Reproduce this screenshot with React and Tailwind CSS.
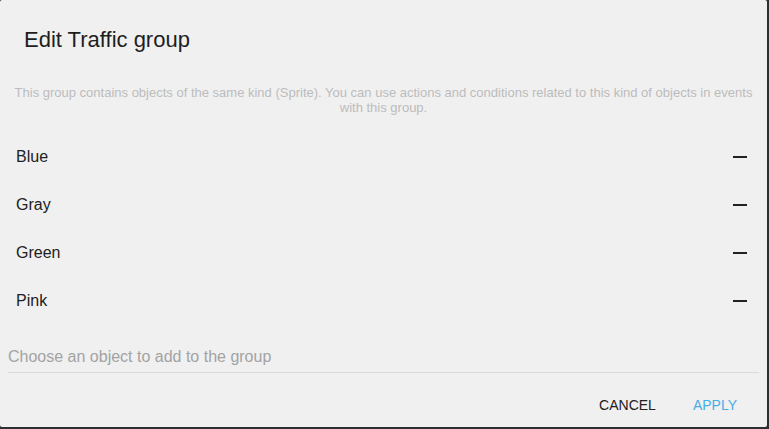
import React from "react";

const objects = ["Blue", "Gray", "Green", "Pink"];

function MinusIcon() {
  return (
    <svg width="24" height="24" viewBox="0 0 24 24" className="block">
      <rect x="5" y="11" width="14" height="2" fill="#222222" />
    </svg>
  );
}

export default function App() {
  return (
    <div
      className="w-[769px] h-[429px] bg-[#2f2f2f] overflow-hidden"
      style={{ fontFamily: '"Liberation Sans", Arial, sans-serif' }}
    >
      <div className="w-[767px] h-[427px] bg-[#f0f0f0] rounded-[2px] flex flex-col">
        {/* title */}
        <div className="px-6 pt-6 h-[85px]">
          <h2 className="text-[22px] leading-[32px] text-[#1e1e1e]">Edit Traffic group</h2>
        </div>

        {/* description */}
        <div className="px-2 h-[48px]">
          <p className="text-[13px] leading-[15px] text-[#bcbcbc] text-center">
            This group contains objects of the same kind (Sprite). You can use actions and conditions related to this kind of objects in events with this group.
          </p>
        </div>

        {/* list of objects */}
        <ul className="flex flex-col">
          {objects.map((name) => (
            <li key={name} className="h-12 flex items-center justify-between pl-4 pr-[15px]">
              <span className="text-[16px] text-[#212121]">{name}</span>
              <MinusIcon />
            </li>
          ))}
        </ul>

        {/* add object field */}
        <div className="px-2 h-[48px] flex flex-col justify-end">
          <div className="h-[32px] flex items-center border-b border-[#dadada]">
            <span className="text-[16px] text-[#a3a3a3]">Choose an object to add to the group</span>
          </div>
        </div>

        {/* actions */}
        <div className="flex-1 flex items-center justify-end pt-[10px] pr-[14px] gap-[5px]">
          <button className="h-9 px-4 text-[14px] uppercase text-[#212121]">Cancel</button>
          <button className="h-9 px-4 text-[14px] uppercase text-[#46ade5]">Apply</button>
        </div>
      </div>
    </div>
  );
}
